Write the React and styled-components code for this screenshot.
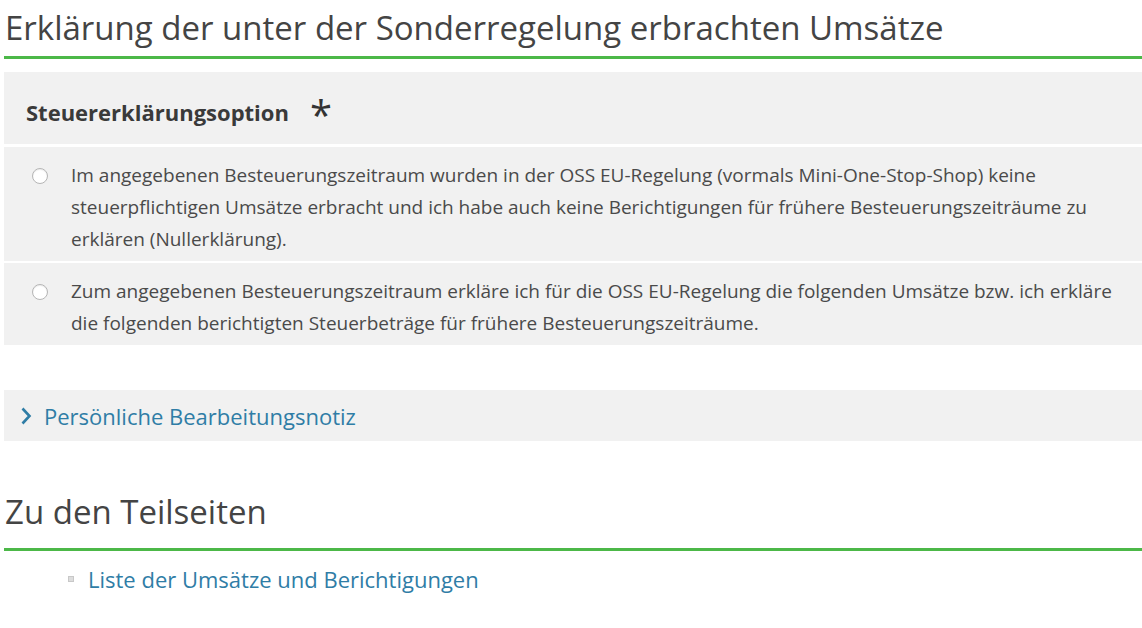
import React from "react";
import styled, { createGlobalStyle } from "styled-components";

const GlobalStyle = createGlobalStyle`
  body {
    margin: 0;
    background: #fff;
    font-family: "Open Sans", "Noto Sans", Arial, sans-serif;
    color: #444;
  }
`;

const Page = styled.main`
  padding: 0 0 0 4px;
`;

const Heading = styled.h2`
  margin: 0;
  padding: 6px 0 6px 1px;
  font-size: 33px;
  font-weight: 400;
  line-height: 44px;
  color: #444;
  border-bottom: 3px solid #4cb848;
`;

const Fieldset = styled.fieldset`
  margin: 13px 0 0;
  padding: 0;
  border: 0;
  background: #f1f1f1;
  min-width: 0;
`;

const LegendBand = styled.div`
  display: flex;
  align-items: center;
  gap: 21px;
  height: 30px;
  padding: 25px 22px 17px;
  border-bottom: 3px solid #fff;
`;

const Legend = styled.span`
  font-size: 22px;
  font-weight: 700;
  color: #3a3a3a;
`;

const Required = styled.span`
  font-size: 40px;
  line-height: 20px;
  height: 20px;
  color: #333;
  transform: translateY(3px);
`;

const OptionRow = styled.label`
  display: grid;
  grid-template-columns: 67px 1fr;
  padding: 12px 0 6px;
  border-top: ${(p) => (p.$first ? "0" : "2px solid #fff")};
  cursor: pointer;
`;

const RadioCell = styled.div`
  display: flex;
  justify-content: center;
  padding: 9px 0 0 4px;
`;

const Radio = styled.span`
  width: 14px;
  height: 14px;
  border-radius: 50%;
  background: #fff;
  border: 1px solid #b5b5b5;
  box-shadow: inset 0 1px 1px rgba(0, 0, 0, 0.08);
`;

const OptionText = styled.span`
  font-size: 19px;
  line-height: 32px;
  color: #4a4a4a;
  padding-right: 8px;
`;

const Notiz = styled.button`
  display: flex;
  align-items: center;
  gap: 11px;
  width: 100%;
  margin-top: 45px;
  height: 51px;
  padding: 0 0 0 15px;
  border: 0;
  background: #f1f1f1;
  font-family: inherit;
  font-size: 22px;
  color: #2f7da6;
  text-align: left;
  cursor: pointer;
`;

const SubHeading = styled(Heading)`
  margin-top: 43px;
  padding-bottom: 14px;
`;

const LinkList = styled.ul`
  margin: 12px 0 0;
  padding: 0 0 0 64px;
  list-style: none;
`;

const LinkItem = styled.li`
  display: flex;
  align-items: center;
  gap: 14px;
  font-size: 22px;
  line-height: 32px;

  &::before {
    content: "";
    width: 4px;
    height: 4px;
    background: #ddd;
    border: 1px solid #c8c8c8;
  }
`;

const Link = styled.a`
  color: #2f7da6;
  text-decoration: none;
`;

const Chevron = () => (
  <svg width="14" height="20" viewBox="0 0 14 20" fill="none">
    <path d="M3.5 2.5 L10.5 10 L3.5 17.5" stroke="#2f7da6" strokeWidth="2.6" />
  </svg>
);

const options = [
  "Im angegebenen Besteuerungszeitraum wurden in der OSS EU-Regelung (vormals Mini-One-Stop-Shop) keine steuerpflichtigen Umsätze erbracht und ich habe auch keine Berichtigungen für frühere Besteuerungszeiträume zu erklären (Nullerklärung).",
  "Zum angegebenen Besteuerungszeitraum erkläre ich für die OSS EU-Regelung die folgenden Umsätze bzw. ich erkläre die folgenden berichtigten Steuerbeträge für frühere Besteuerungszeiträume.",
];

const App = () => (
  <Page>
    <GlobalStyle />
    <Heading>Erklärung der unter der Sonderregelung erbrachten Umsätze</Heading>
    <Fieldset>
      <LegendBand>
        <Legend>Steuererklärungsoption</Legend>
        <Required>*</Required>
      </LegendBand>
      {options.map((text, i) => (
        <OptionRow key={i} $first={i === 0}>
          <RadioCell>
            <Radio />
          </RadioCell>
          <OptionText>{text}</OptionText>
        </OptionRow>
      ))}
    </Fieldset>
    <Notiz>
      <Chevron />
      Persönliche Bearbeitungsnotiz
    </Notiz>
    <SubHeading>Zu den Teilseiten</SubHeading>
    <LinkList>
      <LinkItem>
        <Link href="#">Liste der Umsätze und Berichtigungen</Link>
      </LinkItem>
    </LinkList>
  </Page>
);

export default App;
